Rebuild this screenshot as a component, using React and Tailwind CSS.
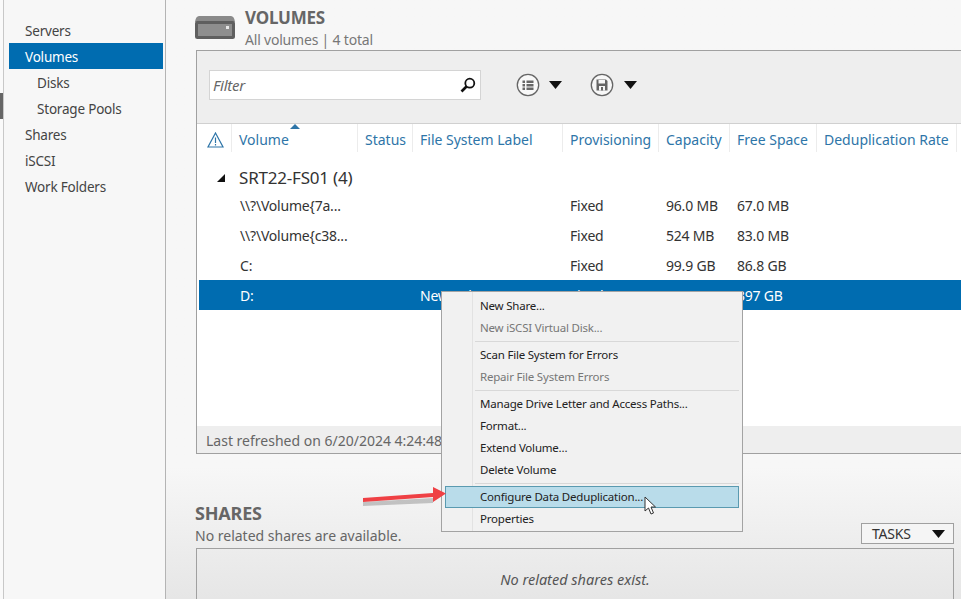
const NAV = [
  { label: 'Servers' },
  { label: 'Volumes', active: true },
  { label: 'Disks', sub: true },
  { label: 'Storage Pools', sub: true },
  { label: 'Shares' },
  { label: 'iSCSI' },
  { label: 'Work Folders' },
];

const COLUMNS = [
  { label: 'Volume', w: 'w-[126px]' },
  { label: 'Status', w: 'w-[55px]' },
  { label: 'File System Label', w: 'w-[150px]' },
  { label: 'Provisioning', w: 'w-[96px]' },
  { label: 'Capacity', w: 'w-[71px]' },
  { label: 'Free Space', w: 'w-[87px]' },
  { label: 'Deduplication Rate', w: 'w-[140px]' },
];

const ROWS = [
  { name: '\\\\?\\Volume{7a...', label: '', prov: 'Fixed', cap: '96.0 MB', free: '67.0 MB' },
  { name: '\\\\?\\Volume{c38...', label: '', prov: 'Fixed', cap: '524 MB', free: '83.0 MB' },
  { name: 'C:', label: '', prov: 'Fixed', cap: '99.9 GB', free: '86.8 GB' },
  { name: 'D:', label: 'New Volume', prov: 'Fixed', cap: '499 GB', free: '397 GB', selected: true },
];

const MENU = [
  [{ label: 'New Share...' }, { label: 'New iSCSI Virtual Disk...', disabled: true }],
  [{ label: 'Scan File System for Errors' }, { label: 'Repair File System Errors', disabled: true }],
  [{ label: 'Manage Drive Letter and Access Paths...' }, { label: 'Format...' }, { label: 'Extend Volume...' }, { label: 'Delete Volume' }],
  [{ label: 'Configure Data Deduplication...', hover: true }, { label: 'Properties' }],
];

function Caret({ className = '' }) {
  return (
    <svg width="13" height="8" viewBox="0 0 13 8" className={className}>
      <path d="M0 0H13L6.500 8Z" fill="#111" />
    </svg>
  );
}

function DriveIcon() {
  return (
    <svg width="40" height="24" viewBox="0 0 40 24">
      <path d="M4 1H36C38 1 39.500 3 40 7H0C.5 3 2 1 4 1Z" fill="#8a8a8a" />
      <rect x="0" y="6" width="40" height="18" rx="2.500" fill="#5f5f5f" />
      <rect x="3" y="9" width="34" height="12" fill="#8e8e8e" />
      <rect x="31" y="11" width="3" height="3" fill="#e8e8e8" />
    </svg>
  );
}

function ListIcon() {
  return (
    <svg width="24" height="24" viewBox="0 0 24 24">
      <circle cx="12" cy="12" r="10.700" fill="#f8f8f8" stroke="#666" strokeWidth="1.300" />
      <path d="M6.500 7.500h2.500v2.500h-2.500zM10.500 7.500h7v2.500h-7zM6.500 11h2.500v2.500h-2.500zM10.500 11h7v2.500h-7zM6.500 14.500h2.500v2.500h-2.500zM10.500 14.500h7v2.500h-7z" fill="#666" />
    </svg>
  );
}

function SaveIcon() {
  return (
    <svg width="24" height="24" viewBox="0 0 24 24">
      <circle cx="12" cy="12" r="10.700" fill="#f8f8f8" stroke="#666" strokeWidth="1.300" />
      <path d="M6.500 6.500h9.500l1.500 1.500v9.500h-11z" fill="#666" />
      <rect x="8.500" y="7" width="6.500" height="3.500" fill="#f8f8f8" />
      <rect x="9" y="13" width="6" height="4.500" fill="#f8f8f8" />
      <rect x="11" y="14" width="2" height="3.500" fill="#666" />
    </svg>
  );
}

function Sidebar() {
  return (
    <aside className="w-[162px] shrink-0 h-full border-r border-[#b4b4b4] bg-[#f7f7f7] pt-[17px] pl-[5px] pr-[2px] relative">
      {NAV.map((item) => (
        <div
          key={item.label}
          className={`h-[26px] pt-[2px] flex items-center text-[13.5px] ${item.sub ? 'pl-[28px]' : 'pl-[16px]'} ${item.active ? 'bg-[#006cb0] text-white' : 'text-[#444]'}`}
        >
          {item.label}
        </div>
      ))}
    </aside>
  );
}

function Row({ row }) {
  return (
    <div className={`h-[30px] ml-[2px] flex items-center text-[14px] ${row.selected ? 'bg-[#006cb0] text-white' : 'text-[#333]'}`}>
      <div className="w-[41px] shrink-0" />
      <div className="w-[180px] shrink-0">{row.name}</div>
      <div className="w-[150px] shrink-0">{row.label}</div>
      <div className="w-[96px] shrink-0">{row.prov}</div>
      <div className="w-[71px] shrink-0">{row.cap}</div>
      <div className="w-[86px] shrink-0">{row.free}</div>
    </div>
  );
}

function VolumesPanel() {
  return (
    <div className="ml-[1px] mr-[-20px] h-[404px] border border-[#a0a0a0] bg-white flex flex-col">
      <div className="h-[73px] shrink-0 bg-[#eeeeee] border-b border-[#d0d0d0] flex items-center pl-[12px] pb-[4px]">
        <div className="w-[272px] h-[30px] bg-white border border-[#d4d4d4] flex items-center justify-between pl-[3px] pr-[4px]">
          <span className="italic text-[15px] text-[#666]">Filter</span>
          <svg width="16" height="16" viewBox="0 0 16 16">
            <circle cx="9.800" cy="6.200" r="4.500" fill="none" stroke="#111" strokeWidth="1.800" />
            <path d="M6.500 9.500L1.500 14.500" stroke="#111" strokeWidth="2.600" />
          </svg>
        </div>
        <div className="ml-[35px] flex items-center gap-[9px]">
          <ListIcon />
          <Caret />
        </div>
        <div className="ml-[28px] flex items-center gap-[10px]">
          <SaveIcon />
          <Caret />
        </div>
      </div>

      <div className="h-[28px] shrink-0 flex text-[14px] tracking-normal text-[#2e75a8] relative">
        <div className="w-[34px] shrink-0 flex items-center justify-center pt-[3px] pl-[3px]">
          <svg width="17" height="16" viewBox="0 0 17 16">
            <path d="M8.500 1L16 15H1Z" fill="none" stroke="#2e75a8" strokeWidth="1.200" />
            <path d="M8.500 5.500V11M8.500 12V13.500" stroke="#2e75a8" strokeWidth="1.200" />
          </svg>
        </div>
        {COLUMNS.map((col) => (
          <div key={col.label} className={`${col.w} shrink-0 flex items-center pl-[7px] pt-[3px] border-l border-[#ececec] whitespace-nowrap`}>
            {col.label}
          </div>
        ))}
        <div className="w-[10px] border-l border-[#ececec]" />
        <svg width="10" height="5" viewBox="0 0 10 5" className="absolute left-[93px] top-[0px]">
          <path d="M5 0L10 5H0Z" fill="#2e75a8" />
        </svg>
      </div>

      <div className="flex-1">
        <div className="h-[38px] flex items-center text-[17px] text-[#333] pt-[14px]">
          <svg width="9" height="9" viewBox="0 0 9 9" className="ml-[20px] mr-[13px]">
            <path d="M8 0V8H0Z" fill="#111" />
          </svg>
          SRT22-FS01 (4)
        </div>
        {ROWS.map((row) => (
          <Row key={row.name} row={row} />
        ))}
      </div>

      <div className="h-[27px] shrink-0 bg-[#eeeeee] flex items-center pl-[9px] pt-[2px] text-[14px] tracking-normal text-[#666] whitespace-nowrap">
        Last refreshed on 6/20/2024 4:24:48 PM
      </div>
    </div>
  );
}

function ContextMenu() {
  return (
    <div className="absolute left-[441px] top-[291px] w-[302px] h-[241px] bg-[#f1f1f1] border border-[#a3a3a3] pt-[3px] pl-[3px] pr-[3px] text-[11.5px] z-10">
      <div className="absolute left-[30px] top-0 bottom-0 w-px bg-[#e2e2e2]" />
      {MENU.map((group, i) => (
        <div key={i}>
          {i > 0 && <div className="h-[5px] flex items-center pl-[30px]"><div className="h-px w-full bg-[#d8d8d8]" /></div>}
          {group.map((item) => (
            <div
              key={item.label}
              className={`relative h-[22px] flex items-center pl-[35px] ${item.disabled ? 'text-[#777]' : 'text-[#222]'} ${item.hover ? 'bg-[#b9dcea] outline outline-[#5a9ab0] -outline-offset-1' : ''}`}
            >
              {item.label}
            </div>
          ))}
        </div>
      ))}
    </div>
  );
}

function SharesSection() {
  return (
    <div className="mt-[47px]">
      <div className="flex items-end justify-between">
        <div className="pb-[2px]">
          <div className="text-[18px] leading-[24px] font-bold text-[#666]">SHARES</div>
          <div className="mt-[1px] text-[14px] leading-[20px] tracking-normal text-[#666]">No related shares are available.</div>
        </div>
        <div className="w-[93px] h-[21px] mb-[4px] mr-[7px] border border-[#a0a0a0] bg-[#f5f5f5] flex items-center justify-between pl-[10px] pr-[8px] text-[14px] text-[#333]">
          TASKS
          <Caret />
        </div>
      </div>
      <div className="ml-[1px] mr-[7px] h-[60px] border border-[#a0a0a0] border-b-0 flex justify-center pt-[20px] italic text-[14.5px] tracking-normal text-[#555]">
        No related shares exist.
      </div>
    </div>
  );
}

export default function App() {
  return (
    <div className="relative w-[961px] h-[599px] overflow-hidden flex bg-[#f7f7f7] font-['Noto_Sans','Open_Sans',sans-serif] tracking-[-0.2px]">
      <div className="w-[4px] shrink-0 h-full bg-[#fafafa] border-r border-[#c8c8c8] relative">
        <div className="absolute left-0 top-[93px] w-[3px] h-[26px] bg-[#666]" />
      </div>
      <Sidebar />
      <main className="flex-1 min-w-0 pl-[29px] bg-gradient-to-b from-[#f7f7f7] from-[78%] to-[#e6e6e6]">
        <div className="h-[50px] flex">
          <div className="pt-[15px]"><DriveIcon /></div>
          <div className="ml-[10px] pt-[6px]">
            <div className="text-[17px] leading-[23px] font-bold text-[#666]">VOLUMES</div>
            <div className="text-[14px] leading-[21px] text-[#777]">All volumes | 4 total</div>
          </div>
        </div>
        <VolumesPanel />
        <SharesSection />
      </main>
      <ContextMenu />
      <svg width="90" height="30" viewBox="0 0 90 30" className="absolute left-[360px] top-[481px] z-20">
        <path d="M3 19L73 15V20L3 23Z" fill="#000" opacity="0.2" transform="translate(0 2)" />
        <path d="M3 17L73 12V6L86 12.500L73 21V16L3 21Z" fill="#ef4044" />
      </svg>
      <svg width="14" height="20" viewBox="0 0 14 20" className="absolute left-[644px] top-[496px] z-20">
        <path d="M1 1V15L4.500 12L7 18L9.500 17L7 11H11.500Z" fill="#fff" stroke="#333" strokeWidth="1" />
      </svg>
    </div>
  );
}
